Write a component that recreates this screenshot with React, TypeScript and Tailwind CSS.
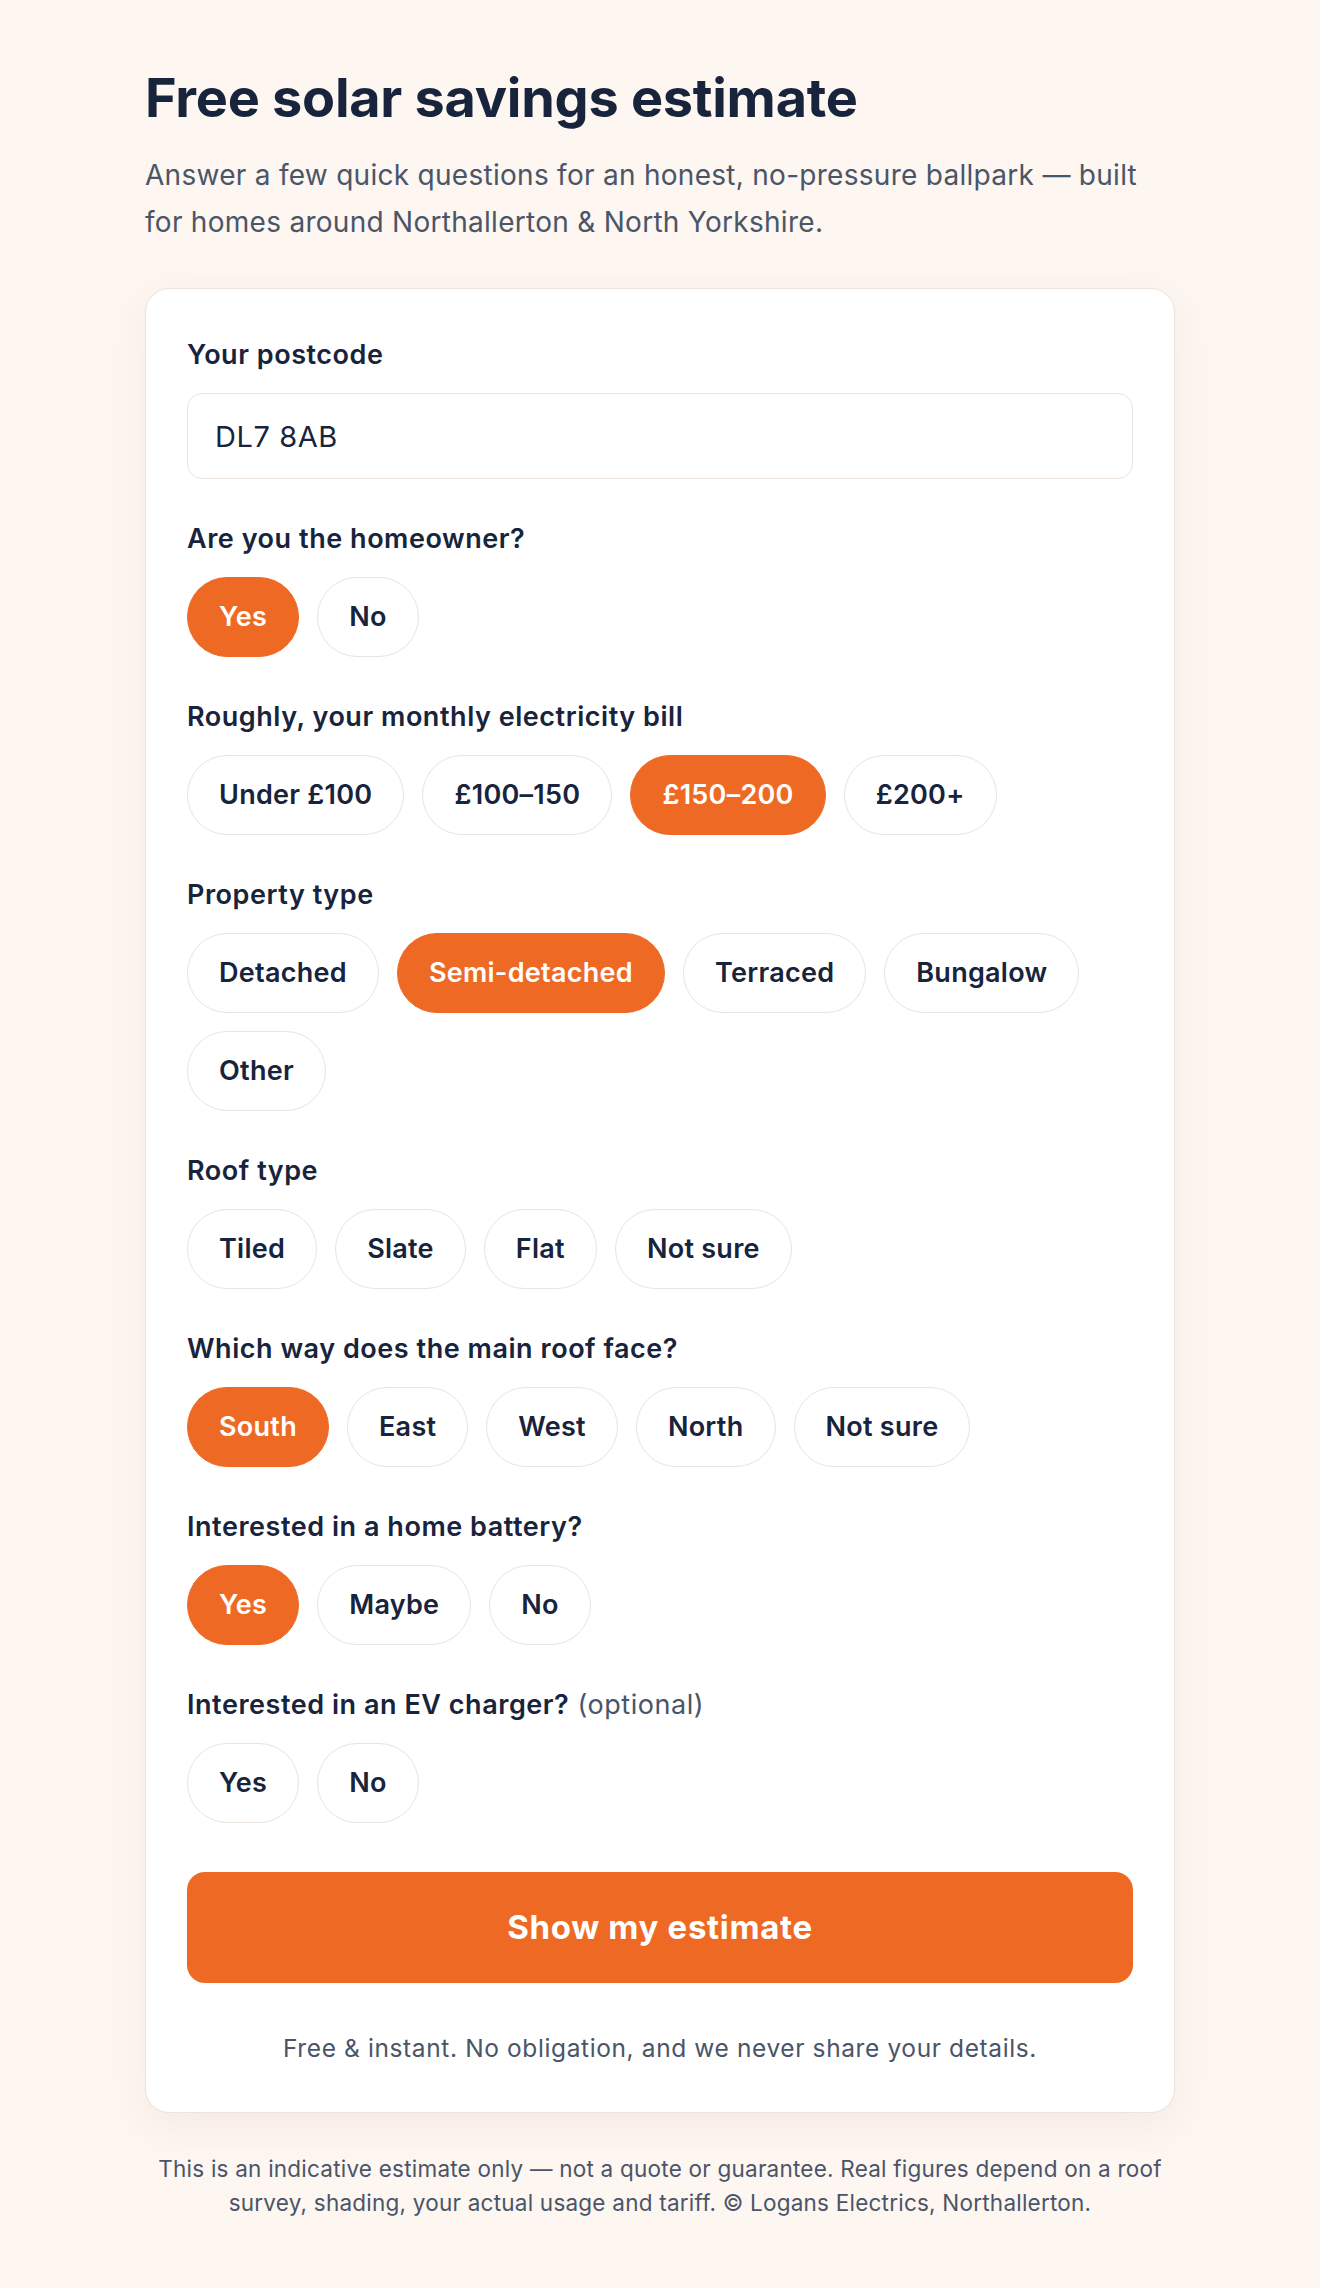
import React, { useState } from "react";

type Question = {
  key: string;
  label: string;
  hint?: string;
  options: string[];
};

const questions: Question[] = [
  { key: "owner", label: "Are you the homeowner?", options: ["Yes", "No"] },
  {
    key: "bill",
    label: "Roughly, your monthly electricity bill",
    options: ["Under £100", "£100–150", "£150–200", "£200+"],
  },
  {
    key: "property",
    label: "Property type",
    options: ["Detached", "Semi-detached", "Terraced", "Bungalow", "Other"],
  },
  { key: "roof", label: "Roof type", options: ["Tiled", "Slate", "Flat", "Not sure"] },
  {
    key: "facing",
    label: "Which way does the main roof face?",
    options: ["South", "East", "West", "North", "Not sure"],
  },
  { key: "battery", label: "Interested in a home battery?", options: ["Yes", "Maybe", "No"] },
  { key: "ev", label: "Interested in an EV charger?", hint: "(optional)", options: ["Yes", "No"] },
];

const App: React.FC = () => {
  const [postcode, setPostcode] = useState("DL7 8AB");
  const [answers, setAnswers] = useState<Record<string, string>>({
    owner: "Yes",
    bill: "£150–200",
    property: "Semi-detached",
    facing: "South",
    battery: "Yes",
  });

  const pick = (key: string, value: string) => {
    setAnswers((prev) => ({ ...prev, [key]: value }));
  };

  return (
    <div className="min-h-screen bg-[#fdf6f1] font-['Inter','Noto_Sans',sans-serif] text-[#18233c]">
      <div className="mx-auto w-[1030px] pt-[68px] pb-[80px]">
        <h1 className="text-[54px] font-bold leading-[60px] tracking-[-0.005em]">
          Free solar savings estimate
        </h1>
        <p className="mt-[24px] text-[28px] leading-[47px] tracking-[0.01em] text-[#4a5568]">
          Answer a few quick questions for an honest, no-pressure ballpark — built for homes
          around Northallerton &amp; North Yorkshire.
        </p>

        <div className="mt-[42px] rounded-[24px] border border-[#ebe3dc] bg-white px-[41px] pt-[48px] pb-[47px] shadow-[0_12px_40px_rgba(150,100,70,0.08)]">
          <div className="flex flex-col gap-[42px]">
            <div>
              <label className="mb-[20px] block text-[27px] font-semibold leading-[36px] tracking-[0.02em]">
                Your postcode
              </label>
              <input
                value={postcode}
                onChange={(e) => setPostcode(e.target.value)}
                className="h-[86px] w-full rounded-[15px] border-[1.5px] border-[#ebe3dc] px-[27px] text-[29px] tracking-[0.02em] text-[#18233c] outline-none"
              />
            </div>

            {questions.map((q) => (
              <div key={q.key}>
                <div className="mb-[20px] text-[27px] font-semibold leading-[36px] tracking-[0.02em]">
                  {q.label}
                  {q.hint && <span className="font-normal text-[#4a5568]"> {q.hint}</span>}
                </div>
                <div className="flex flex-wrap gap-[18px]">
                  {q.options.map((opt) => {
                    const active = answers[q.key] === opt;
                    return (
                      <button
                        key={opt}
                        onClick={() => pick(q.key, opt)}
                        className={`h-[80px] rounded-full border-[1.5px] px-[31px] text-[27px] font-semibold tracking-[0.01em] ${
                          active
                            ? "border-[#ee6a24] bg-[#ee6a24] text-white"
                            : "border-[#ebe3dc] bg-white text-[#18233c]"
                        }`}
                      >
                        {opt}
                      </button>
                    );
                  })}
                </div>
              </div>
            ))}
          </div>

          <button className="mt-[49px] h-[111px] w-full rounded-[18px] bg-[#ee6a24] text-[33px] font-bold tracking-[0.02em] text-white">
            Show my estimate
          </button>

          <p className="mt-[48px] text-center text-[24.5px] leading-[34px] tracking-[0.025em] text-[#4a5568]">
            Free &amp; instant. No obligation, and we never share your details.
          </p>
        </div>

        <p className="mx-auto mt-[39px] max-w-[1020px] text-center text-[22.5px] leading-[34px] tracking-[0.01em] text-[#4a5568]">
          This is an indicative estimate only — not a quote or guarantee. Real figures depend on
          a roof survey, shading, your actual usage and tariff. © Logans Electrics, Northallerton.
        </p>
      </div>
    </div>
  );
};

export default App;
